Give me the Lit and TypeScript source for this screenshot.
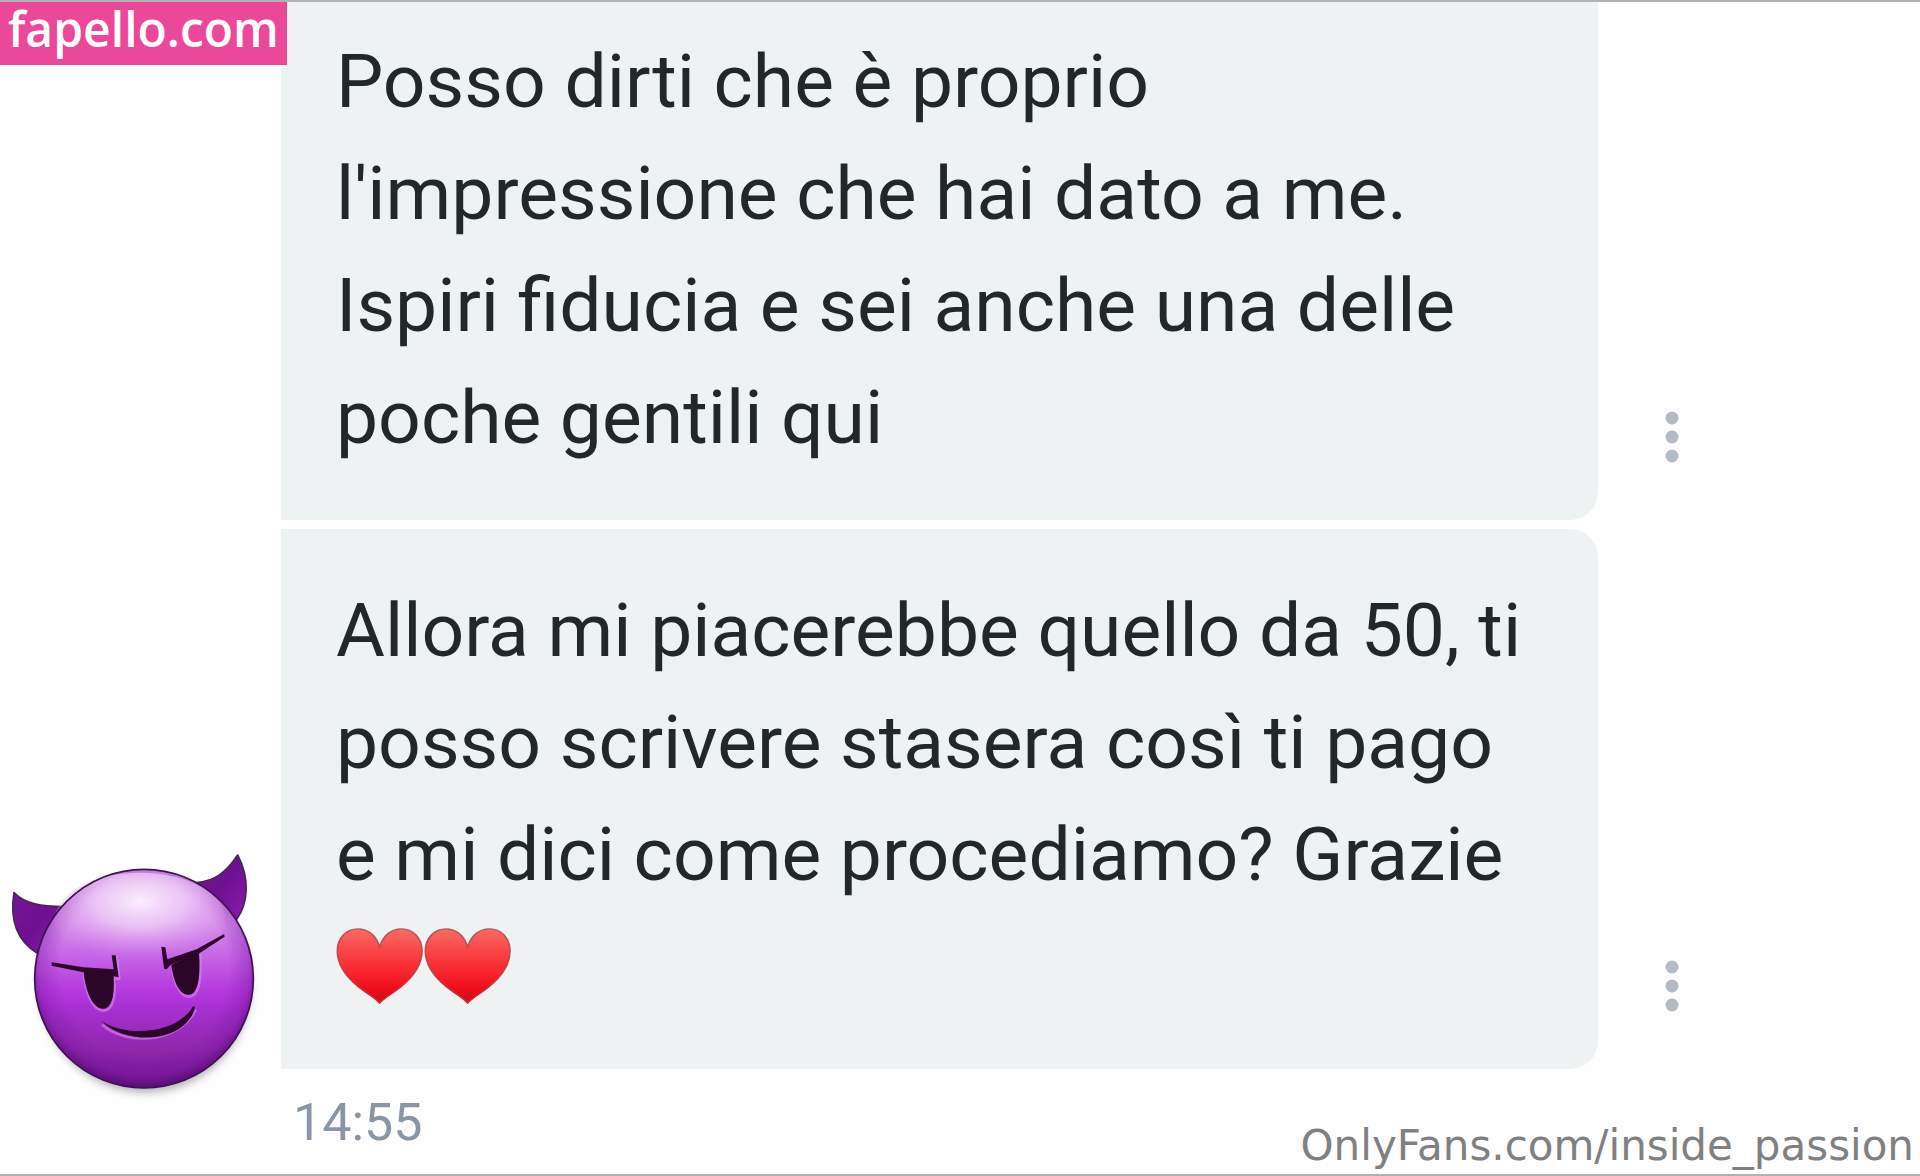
import { LitElement, html, css, svg } from "lit";
import { customElement, property } from "lit/decorators.js";

@customElement("heart-emoji")
class HeartEmoji extends LitElement {
  static styles = css`
    :host { display: inline-block; vertical-align: -13px; }
    .heart { display: block; width: 88px; height: 78px; }
  `;
  render() {
    return html`<svg class="heart" viewBox="0 0 264 234" role="img" aria-label="❤️">
      <defs>
        <linearGradient id="fill" x1="0" y1="0" x2="0" y2="1">
          <stop offset="0" stop-color="#fb6a66" />
          <stop offset=".3" stop-color="#fa4545" />
          <stop offset=".6" stop-color="#f8232b" />
          <stop offset=".8" stop-color="#ee0d18" />
          <stop offset="1" stop-color="#c80d18" />
        </linearGradient>
        <linearGradient id="edge" x1="0" y1="0" x2="0" y2="1">
          <stop offset="0" stop-color="#b55a60" />
          <stop offset="1" stop-color="#cf2630" />
        </linearGradient>
      </defs>
      <path
        d="M131 228C116 211 94 201 66 178C26 145 4 113 4 72C4 33 31 6 66 6C96 6 121 25 131 61C141 25 166 6 196 6C231 6 258 33 258 72C258 113 236 145 196 178C168 201 146 211 131 228Z"
        fill="url(#fill)" stroke="url(#edge)" stroke-width="5" stroke-linejoin="round"
      />
    </svg>`;
  }
}

@customElement("devil-avatar")
class DevilAvatar extends LitElement {
  static styles = css`
    :host { display: block; }
    .face { display: block; width: 270px; height: 270px; }
  `;
  render() {
    return html`<svg class="face" viewBox="0 0 810 810" role="img" aria-label="😈">
      <defs>
        <linearGradient id="skin" x1="0" y1="0" x2="0" y2="1">
          <stop offset="0" stop-color="#dfa3ef" />
          <stop offset=".25" stop-color="#d68fec" />
          <stop offset=".4" stop-color="#c664e6" />
          <stop offset=".55" stop-color="#b53ade" />
          <stop offset=".65" stop-color="#a62fd0" />
          <stop offset=".82" stop-color="#9027ae" />
          <stop offset="1" stop-color="#74148f" />
        </linearGradient>
        <radialGradient id="shine" cx=".5" cy=".3" r=".62">
          <stop offset="0" stop-color="#fdf3fe" stop-opacity=".95" />
          <stop offset=".45" stop-color="#f2d3f9" stop-opacity=".7" />
          <stop offset=".8" stop-color="#e2a8f2" stop-opacity=".25" />
          <stop offset="1" stop-color="#d993ee" stop-opacity="0" />
        </radialGradient>
        <radialGradient id="rim" cx="432" cy="390" r="350" gradientUnits="userSpaceOnUse">
          <stop offset=".72" stop-color="#7a16a4" stop-opacity="0" />
          <stop offset=".9" stop-color="#74129c" stop-opacity=".35" />
          <stop offset="1" stop-color="#500a6c" stop-opacity=".7" />
        </radialGradient>
        <linearGradient id="horn" x1="0" y1="0" x2="1" y2="1">
          <stop offset="0" stop-color="#741596" />
          <stop offset=".5" stop-color="#6f1091" />
          <stop offset="1" stop-color="#8a1bb0" />
        </linearGradient>
        <filter id="soft" x="-20%" y="-20%" width="140%" height="140%">
          <feGaussianBlur stdDeviation="12" />
        </filter>
      </defs>
      <ellipse cx="436" cy="436" rx="316" ry="322" fill="#555" opacity=".45" filter="url(#soft)" />
      <path d="M42 158C75 192 125 200 192 200L112 340C55 305 28 245 42 158Z" fill="url(#horn)" stroke="#4b2458" stroke-width="5" stroke-linejoin="round" />
      <path d="M713 45C680 95 645 124 588 128L710 238C745 190 750 115 713 45Z" fill="url(#horn)" stroke="#4b2458" stroke-width="5" stroke-linejoin="round" />
      <circle cx="432" cy="416" r="328" fill="url(#skin)" />
      <circle cx="432" cy="416" r="328" fill="url(#rim)" />
      <ellipse cx="420" cy="240" rx="256" ry="142" fill="url(#shine)" />
      <circle cx="432" cy="416" r="328" fill="none" stroke="#3f1150" stroke-width="5" />
      ${svg`<g fill="none" stroke="#dd8af2" stroke-width="8" stroke-linecap="round" stroke-linejoin="round" opacity=".6" transform="translate(2 4)">
        <path d="M250 395C254 450 275 508 308 508C338 508 345 462 340 412L356 412L348 348" />
        <path d="M516 390C522 430 540 466 565 466C594 466 602 420 599 340" />
        <path d="M306 552C378 612 530 608 584 508" />
      </g>`}
      <g fill="#2c0628">
        <path d="M250 388C254 445 275 506 308 506C338 506 345 460 340 398Z" />
        <path d="M514 374C520 425 538 464 565 464C594 464 602 415 597 336Z" />
        <path d="M155 367L250 382L341 388L335 346L347 346L356 412L340 408L250 397L155 377Z" />
        <path d="M484 320L496 322L502 358L590 328L672 282L674 290L598 340L512 374L500 388L492 386Z" />
        <path d="M304 542C375 592 530 584 578 500C582 496 586 500 584 506C555 608 380 620 304 542Z" />
      </g>
    </svg>`;
  }
}

@customElement("chat-bubble")
class ChatBubble extends LitElement {
  @property({ reflect: true }) place = "last";
  static styles = css`
    :host {
      display: block;
      box-sizing: border-box;
      padding: 45px 55px 47px;
      background: #eef2f3;
      border-radius: 0 28px 28px 0;
    }
    :host([place="first"]) { padding-top: 23px; border-top-right-radius: 0; }
    .text {
      margin: 0;
      color: #222829;
      font: 400 75px/112px Roboto, sans-serif;
    }
  `;
  render() {
    return html`<p class="text"><slot></slot></p>`;
  }
}

@customElement("message-menu")
class MessageMenu extends LitElement {
  static styles = css`
    :host { display: block; align-self: end; padding: 0 0 51px 42px; }
    .menu { display: block; padding: 0; border: 0; background: none; cursor: pointer; }
    .dots { display: block; width: 64px; height: 64px; fill: #b4bbc3; }
  `;
  render() {
    return html`<button class="menu" type="button" aria-label="Menu">
      <svg class="dots" viewBox="0 0 64 64">
        <circle cx="32" cy="13" r="6.5" />
        <circle cx="32" cy="32" r="6.5" />
        <circle cx="32" cy="51" r="6.5" />
      </svg>
    </button>`;
  }
}

@customElement("app-root")
class AppRoot extends LitElement {
  static styles = css`
    :host { display: block; }
    .page {
      position: relative;
      box-sizing: border-box;
      min-height: 100vh;
      overflow: hidden;
      background: #fefefe;
      border-top: 2px solid #b3b3b3;
      border-bottom: 2px solid #b3b3b3;
    }
    .thread {
      display: grid;
      grid-template-columns: 281px minmax(0, 1fr) 322px;
      row-gap: 9px;
    }
    .bubble { grid-column: 2; }
    .avatar { grid-column: 1; align-self: end; margin-bottom: -41px; }
    .time {
      display: block;
      padding: 22px 0 0 293px;
      color: #8a96a3;
      font: 400 52px/64px Roboto, sans-serif;
    }
    .site {
      position: absolute;
      top: -2px;
      left: 0;
      padding: 0 8px 8px;
      background: #ec4899;
      color: #fff;
      font: 600 48px/57px "Open Sans", sans-serif;
      text-decoration: none;
    }
    .credit {
      position: absolute;
      right: 6px;
      bottom: 3px;
      color: #808080;
      font: 400 42px/50px "DejaVu Sans", sans-serif;
      text-decoration: none;
    }
  `;
  render() {
    return html`<main class="page">
      <section class="thread">
        <chat-bubble class="bubble" place="first">Posso dirti che è proprio l'impressione che hai dato a me. Ispiri fiducia e sei anche una delle poche gentili qui</chat-bubble>
        <message-menu></message-menu>
        <devil-avatar class="avatar"></devil-avatar>
        <chat-bubble class="bubble">Allora mi piacerebbe quello da 50, ti posso scrivere stasera così ti pago e mi dici come procediamo? Grazie <heart-emoji></heart-emoji><heart-emoji></heart-emoji></chat-bubble>
        <message-menu></message-menu>
      </section>
      <time class="time" datetime="14:55">14:55</time>
      <a class="site" href="#">fapello.com</a>
      <a class="credit" href="#">OnlyFans.com/inside_passion</a>
    </main>`;
  }
}
